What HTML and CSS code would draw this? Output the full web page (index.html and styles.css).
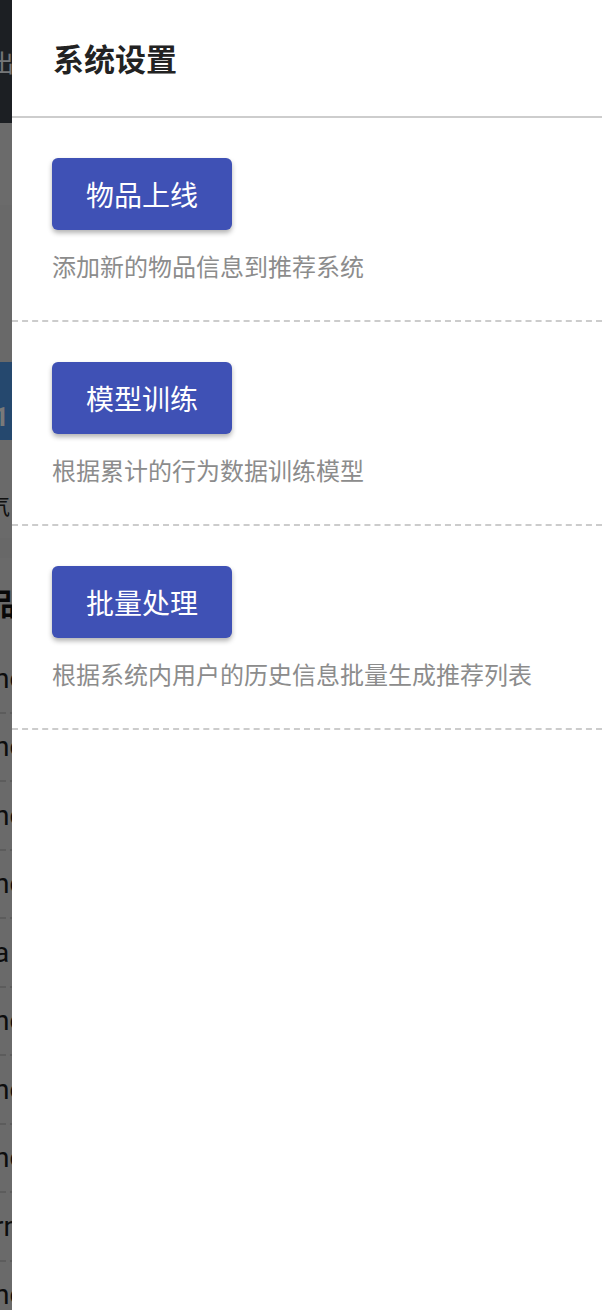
FILE: index.html
```html
<!DOCTYPE html>
<html lang="zh">
<head>
<meta charset="utf-8">
<title>系统设置</title>
<link rel="stylesheet" href="styles.css">
</head>
<body>
<div class="page">
  <div class="topbar"><span class="topbar-text">出</span></div>
  <div class="banner"></div>
  <div class="banner-low"></div>
  <div class="band"><span class="band-text">1</span></div>
  <div class="notice"><span class="notice-text">气</span></div>
  <div class="notice-gap"></div>
  <div class="list-head"><span class="list-head-text">品</span></div>
  <ul class="list">
    <li class="row">nc</li>
    <li class="row">nc</li>
    <li class="row">nc</li>
    <li class="row">nc</li>
    <li class="row">a</li>
    <li class="row">nc</li>
    <li class="row">nc</li>
    <li class="row">nc</li>
    <li class="row">rn</li>
    <li class="row">nc</li>
  </ul>
</div>
<div class="overlay"></div>
<aside class="drawer">
  <header class="drawer-header">
    <h1 class="drawer-title">系统设置</h1>
  </header>
  <section class="setting">
    <button class="setting-btn">物品上线</button>
    <p class="setting-desc">添加新的物品信息到推荐系统</p>
  </section>
  <section class="setting">
    <button class="setting-btn">模型训练</button>
    <p class="setting-desc">根据累计的行为数据训练模型</p>
  </section>
  <section class="setting">
    <button class="setting-btn">批量处理</button>
    <p class="setting-desc">根据系统内用户的历史信息批量生成推荐列表</p>
  </section>
</aside>
</body>
</html>
```

FILE: styles.css
```css
* { box-sizing: border-box; }
html, body { margin: 0; padding: 0; }
body {
  font-family: "Noto Sans CJK SC", "Noto Sans", sans-serif;
  background: #d6d6d6;
  overflow: hidden;
  height: 1310px;
}

/* background page (seen dimmed at the left edge) */
.page { width: 602px; overflow: hidden; }
.topbar {
  height: 123px;
  background: #383f47;
  display: flex;
  align-items: center;
}
.topbar-text {
  margin-left: -10px;
  font-size: 24px;
  color: #e8ecf0;
}
.banner { height: 82px; background: #d6d6d6; }
.banner-low { height: 157px; background: #d2d2d2; }
.band {
  height: 78px;
  background: #4a90dc;
  display: flex;
  align-items: flex-end;
  padding-bottom: 8px;
}
.band-text {
  margin-left: -6px;
  font-size: 26px;
  font-weight: 700;
  color: #f2f2f2;
  font-family: "Roboto", sans-serif;
}
.notice {
  height: 98px;
  background: #d4d4d4;
  display: flex;
  align-items: center;
  padding-top: 30px;
}
.notice-text { margin-left: -12px; font-size: 22px; color: #222; }
.notice-gap { height: 20px; background: #d0d0d0; }
.list-head {
  height: 87px;
  background: #d4d4d4;
  display: flex;
  align-items: center;
}
.list-head-text { margin-left: -14px; font-size: 30px; font-weight: 700; color: #111; }
.list { list-style: none; margin: 0; padding: 0; background: #d4d4d4; }
.row {
  height: 68.5px;
  display: flex;
  align-items: center;
  text-indent: -6px;
  font-family: "Roboto", sans-serif;
  font-size: 28px;
  color: #1a1a1a;
  border-bottom: 2px dashed #b8b8b8;
}

.overlay {
  position: fixed;
  inset: 0;
  background: rgba(0, 0, 0, 0.5);
}

/* drawer */
.drawer {
  position: fixed;
  top: 0;
  right: 0;
  bottom: 0;
  width: 590px;
  background: #fff;
  display: flex;
  flex-direction: column;
}
.drawer-header {
  height: 118px;
  border-bottom: 2px solid #cdcdcd;
  display: flex;
  align-items: center;
  padding-left: 41px;
}
.drawer-title {
  margin: 0;
  font-size: 31px;
  font-weight: 700;
  color: #222222;
  line-height: 1;
  margin-top: -2px;
}
.setting {
  padding: 40px 0 36px 40px;
  border-bottom: 2px dashed #cccccc;
  display: flex;
  flex-direction: column;
  align-items: flex-start;
}
.setting-btn {
  width: 180px;
  height: 72px;
  border: none;
  border-radius: 6px;
  background: #3f51b5;
  color: #fff;
  font-family: inherit;
  font-size: 28px;
  padding: 0;
  box-shadow: 0 3px 5px rgba(0, 0, 0, 0.3);
}
.setting-desc {
  margin: 18px 0 0 0;
  height: 36px;
  line-height: 36px;
  font-size: 24px;
  color: #8c8c8c;
}
```
